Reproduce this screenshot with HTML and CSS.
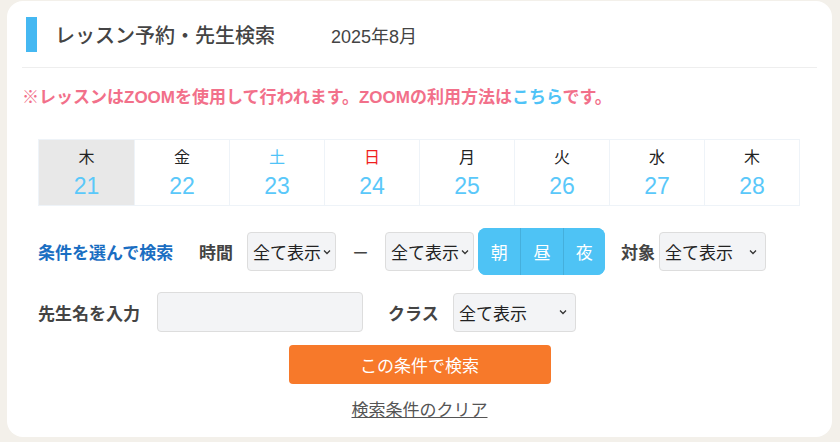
FILE: index.html
```html
<!DOCTYPE html>
<html lang="ja">
<head>
  <meta charset="UTF-8">
  <meta name="viewport" content="width=device-width, initial-scale=1.0">
  <title>レッスン予約・先生検索</title>
  <link rel="stylesheet" href="styles.css">
</head>
<body>
  <div class="card">
    <div class="head">
      <span class="bar"></span>
      <h1 class="title">レッスン予約・先生検索</h1>
      <span class="month">2025年8月</span>
    </div>

    <p class="notice">※レッスンはZOOMを使用して行われます。ZOOMの利用方法は<a href="#" class="notice-link">こちら</a>です。</p>

    <ul class="days">
      <li class="day active"><span class="wd">木</span><span class="num">21</span></li>
      <li class="day"><span class="wd">金</span><span class="num">22</span></li>
      <li class="day"><span class="wd sat">土</span><span class="num">23</span></li>
      <li class="day"><span class="wd sun">日</span><span class="num">24</span></li>
      <li class="day"><span class="wd">月</span><span class="num">25</span></li>
      <li class="day"><span class="wd">火</span><span class="num">26</span></li>
      <li class="day"><span class="wd">水</span><span class="num">27</span></li>
      <li class="day"><span class="wd">木</span><span class="num">28</span></li>
    </ul>

    <form class="filters">
      <div class="row">
        <span class="lead">条件を選んで検索</span>
        <span class="label label-time">時間</span>
        <div class="select small">
          <span>全て表示</span>
          <svg class="chev" width="8" height="6" viewBox="0 0 8 6"><path d="M1 1.5 L4 4.5 L7 1.5" fill="none" stroke="#333" stroke-width="1.3"/></svg>
        </div>
        <span class="dash">ー</span>
        <div class="select small">
          <span>全て表示</span>
          <svg class="chev" width="8" height="6" viewBox="0 0 8 6"><path d="M1 1.5 L4 4.5 L7 1.5" fill="none" stroke="#333" stroke-width="1.3"/></svg>
        </div>
        <div class="periods">
          <button type="button" class="period">朝</button>
          <button type="button" class="period">昼</button>
          <button type="button" class="period">夜</button>
        </div>
        <span class="label label-target">対象</span>
        <div class="select wide">
          <span>全て表示</span>
          <svg class="chev" width="8" height="6" viewBox="0 0 8 6"><path d="M1 1.5 L4 4.5 L7 1.5" fill="none" stroke="#333" stroke-width="1.3"/></svg>
        </div>
      </div>

      <div class="row row-two">
        <span class="label label-name">先生名を入力</span>
        <input type="text" class="name-input">
        <span class="label label-class">クラス</span>
        <div class="select class-select">
          <span>全て表示</span>
          <svg class="chev" width="8" height="6" viewBox="0 0 8 6"><path d="M1 1.5 L4 4.5 L7 1.5" fill="none" stroke="#333" stroke-width="1.3"/></svg>
        </div>
      </div>

      <button type="submit" class="search-btn">この条件で検索</button>
      <a href="#" class="clear">検索条件のクリア</a>
    </form>
  </div>
</body>
</html>
```

FILE: styles.css
```css
* {
  margin: 0;
  padding: 0;
  box-sizing: border-box;
}

body {
  font-family: "Liberation Sans", "Noto Sans CJK JP", sans-serif;
  background-color: #f3f0ea;
  color: #333;
  padding: 1px 8px 0 7px;
}

.card {
  background-color: #ffffff;
  border-radius: 16px;
  height: 436px;
  padding: 16px 15px 0;
}

.head {
  display: flex;
  align-items: center;
  height: 35px;
  padding-left: 4px;
  padding-bottom: 15px;
  box-sizing: content-box;
  border-bottom: 1px solid #eeeeee;
}

.bar {
  width: 11px;
  height: 35px;
  background-color: #45b8f2;
}

.title {
  font-size: 20px;
  font-weight: 500;
  color: #444;
  margin-left: 18px;
}

.month {
  font-size: 18px;
  color: #444;
  margin-left: 56px;
}

.notice {
  margin-top: 18px;
  font-size: 17px;
  font-weight: bold;
  line-height: 24px;
  color: #f2708a;
}

.notice-link {
  color: #4fc3f7;
  text-decoration: none;
}

.days {
  list-style: none;
  display: grid;
  grid-template-columns: repeat(8, 1fr);
  margin: 29px 17px 0 16px;
  border: 1px solid #eef3f8;
  height: 67px;
}

.day {
  display: flex;
  flex-direction: column;
  align-items: center;
  border-left: 1px solid #eef3f8;
}

.day:first-child {
  border-left: none;
}

.day.active {
  background-color: #e8e8e8;
}

.wd {
  font-size: 16px;
  line-height: 20px;
  margin-top: 8px;
  color: #222;
}

.wd.sat {
  color: #4fc3f7;
}

.wd.sun {
  color: #f01e1e;
}

.num {
  font-size: 23px;
  line-height: 28px;
  margin-top: 4px;
  color: #5ac8fa;
}

.filters {
  margin-top: 22px;
  padding-left: 16px;
}

.row {
  display: flex;
  align-items: center;
  height: 47px;
}

.row-two {
  margin-top: 17px;
  height: 40px;
}

.lead {
  font-size: 17px;
  font-weight: bold;
  color: #1a6ec2;
  width: 161px;
}

.label {
  font-size: 17px;
  font-weight: bold;
  color: #444;
}

.label-time {
  width: 48px;
}

.label-target {
  margin-left: 16px;
  width: 38px;
}

.label-name {
  width: 119px;
}

.label-class {
  margin-left: 25px;
  width: 65px;
}

.select {
  display: flex;
  align-items: center;
  height: 39px;
  background-color: #f3f4f6;
  border: 1px solid #dddddd;
  border-radius: 4px;
  padding-left: 5px;
  font-size: 17px;
  color: #222;
}

.select.small {
  width: 89px;
}

.select .chev {
  margin-left: 2px;
}

.select.wide {
  width: 107px;
}

.select.class-select {
  width: 123px;
}

.select.wide .chev,
.select.class-select .chev {
  margin-left: auto;
  margin-right: 8px;
}

.dash {
  width: 49px;
  text-align: center;
  font-size: 16px;
  color: #444;
}

.periods {
  display: flex;
  margin-left: 4px;
  height: 47px;
  border-radius: 8px;
  overflow: hidden;
  background-color: #4ec3f5;
}

.period {
  width: 42.3px;
  border: none;
  border-left: 1px solid #45afdc;
  background-color: #4ec3f5;
  color: #ffffff;
  font-family: inherit;
  font-size: 17px;
}

.period:first-child {
  border-left: none;
}

.name-input {
  width: 206px;
  height: 40px;
  background-color: #f3f4f6;
  border: 1px solid #dddddd;
  border-radius: 4px;
}

.search-btn {
  display: block;
  width: 262px;
  height: 39px;
  margin: 13px auto 0;
  position: relative;
  left: -8px;
  background-color: #f7792a;
  color: #ffffff;
  border: none;
  border-radius: 4px;
  font-family: inherit;
  font-size: 17px;
  cursor: pointer;
}

.clear {
  display: block;
  width: 140px;
  margin: 12px auto 0;
  position: relative;
  left: -8px;
  text-align: center;
  font-size: 17px;
  color: #555;
}
```
